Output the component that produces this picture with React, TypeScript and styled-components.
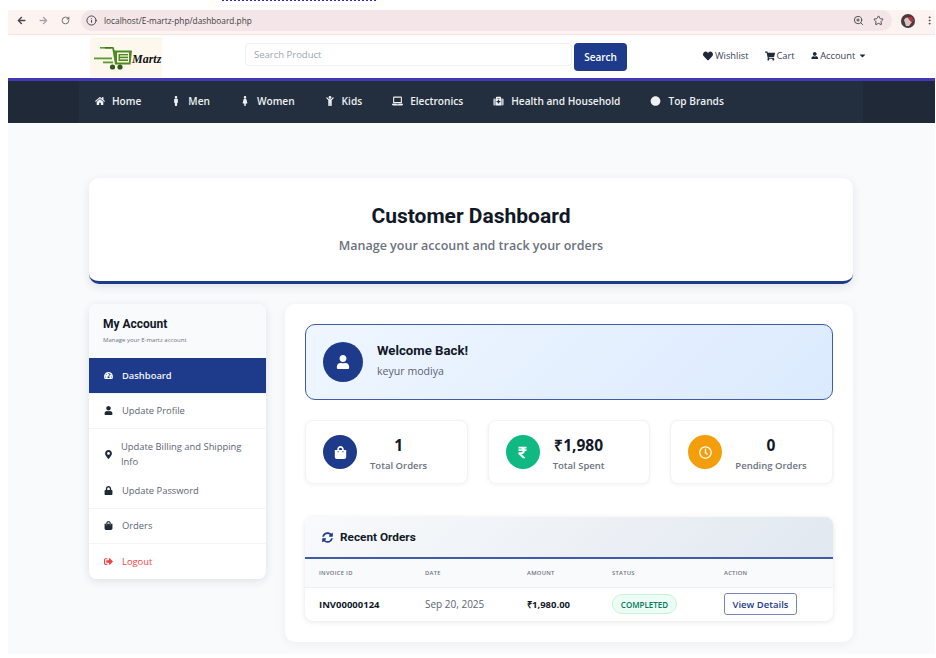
import React from "react";
import styled, { createGlobalStyle } from "styled-components";
import {
  FaArrowLeft,
  FaArrowRight,
  FaCaretDown,
  FaChild,
  FaCircle,
  FaFemale,
  FaHeart,
  FaHome,
  FaLaptop,
  FaLock,
  FaMale,
  FaMapMarkerAlt,
  FaMedkit,
  FaRegClock,
  FaRupeeSign,
  FaShoppingBag,
  FaShoppingCart,
  FaSignOutAlt,
  FaSyncAlt,
  FaTachometerAlt,
  FaUser,
} from "react-icons/fa";
import { LuEllipsisVertical, LuInfo, LuRotateCw, LuStar, LuZoomIn } from "react-icons/lu";

const GlobalStyle = createGlobalStyle`
  html, body {
    margin: 0;
    padding: 0;
    background: #fff;
    overflow: hidden;
  }
  * {
    box-sizing: border-box;
  }
  body {
    font-family: "Open Sans", "Liberation Sans", sans-serif;
  }
`;

const Frame = styled.div`
  width: 936px;
  height: 658px;
  padding: 0 1px 4px 8px;
  display: flex;
  flex-direction: column;
  overflow: hidden;
`;

const TopStrip = styled.div`
  height: 10px;
  flex: none;
  overflow: hidden;
`;

const DottedLine = styled.div`
  width: 154px;
  margin: -1px 0 0 214px;
  border-top: 2px dotted #2a2ad8;
`;

const BrowserBar = styled.div`
  height: 25px;
  flex: none;
  display: flex;
  align-items: center;
  padding: 0 0 3px 2px;
  background: #fdf3f1;
  border-bottom: 1px solid #fbe3df;
`;

const BrowserBtn = styled.span<{ $dim?: boolean }>`
  width: 22px;
  flex: none;
  display: flex;
  justify-content: center;
  font-size: 9px;
  color: ${(p) => (p.$dim ? "#a9a3a3" : "#474747")};
`;

const Omnibox = styled.div`
  width: 811px;
  height: 21px;
  margin-left: 5px;
  flex: none;
  display: flex;
  align-items: center;
  padding: 0 4px 0 1px;
  background: #f4e6e8;
  border-radius: 11px;
`;

const InfoBadge = styled.span`
  width: 18px;
  height: 18px;
  margin-right: 4px;
  flex: none;
  display: flex;
  align-items: center;
  justify-content: center;
  font-size: 11px;
  color: #3c3c3c;
`;

const UrlText = styled.span`
  flex: 1;
  font-size: 8.3px;
  color: #3d3d3d;
`;

const OmniIcon = styled.span`
  width: 20px;
  flex: none;
  display: flex;
  justify-content: center;
  font-size: 11px;
  color: #444;
`;

const ProfileSlot = styled.span`
  margin-left: 9px;
  width: 14px;
  height: 14px;
  flex: none;
  display: flex;
`;

const DotsSlot = styled.span`
  margin-left: 9px;
  flex: none;
  display: flex;
  font-size: 11px;
  color: #444;
`;

const Header = styled.header`
  height: 43px;
  flex: none;
  display: flex;
  align-items: flex-start;
  padding: 2px 0 0 82px;
  background: #fff;
`;

const LogoBox = styled.div`
  width: 72px;
  height: 40px;
  flex: none;
  background: #fdf8ee;
`;

const SearchInput = styled.div`
  width: 327px;
  height: 23px;
  margin: 6px 0 0 83px;
  flex: none;
  display: flex;
  align-items: center;
  padding: 0 8px;
  font-size: 9.5px;
  color: #9ca3af;
  background: #fff;
  border: 1px solid #eef0f3;
  border-radius: 4px;
`;

const SearchButton = styled.button`
  width: 53px;
  height: 28px;
  margin: 6px 0 0 2px;
  flex: none;
  padding: 0;
  font-family: inherit;
  font-size: 10px;
  font-weight: 600;
  color: #fff;
  background: #1e3a8a;
  border: none;
  border-radius: 4px;
`;

const TopLinks = styled.div`
  margin: 12px 0 0 76px;
  display: flex;
  align-items: center;
  gap: 16px;
`;

const TopLink = styled.span`
  display: flex;
  align-items: center;
  gap: 2px;
  font-size: 9.3px;
  color: #374151;
  svg {
    color: #1f2937;
    font-size: 10px;
  }
`;

const UserGlyph = styled(FaUser)`
  && {
    font-size: 7.5px;
  }
`;

const CaretGlyph = styled(FaCaretDown)`
  && {
    margin-left: 1px;
    font-size: 9px;
  }
`;

const NavBar = styled.nav`
  height: 45px;
  flex: none;
  padding-left: 71px;
  padding-right: 72px;
  background: #1f2937;
  border-top: 3px solid #4338b8;
`;

const NavInner = styled.div`
  height: 100%;
  display: flex;
  align-items: center;
  gap: 30px;
  padding: 0 0 2px 16px;
  background: #232f3e;
`;

const NavItem = styled.span<{ $wide?: boolean }>`
  display: flex;
  align-items: center;
  gap: 7px;
  font-size: 10.15px;
  font-weight: 600;
  color: #eef0f3;
  white-space: nowrap;
  svg {
    width: ${(p) => (p.$wide ? "11px" : "10px")};
    height: 10px;
  }
`;

const Page = styled.main`
  flex: 1;
  padding: 55px 82px 0 81px;
  background: #f8fafc;
`;

const Hero = styled.section`
  height: 106px;
  padding-top: 25px;
  text-align: center;
  background: #fff;
  border-bottom: 3px solid #1e3a8a;
  border-radius: 10px;
  box-shadow: 0 3px 10px rgba(30, 41, 59, 0.1);
`;

const HeroTitle = styled.h1`
  margin: 0;
  font-family: Roboto, "Liberation Sans", sans-serif;
  font-size: 21px;
  line-height: 26px;
  font-weight: 700;
  color: #111827;
`;

const HeroSub = styled.p`
  margin: 9px 0 0;
  font-size: 12.5px;
  line-height: 16px;
  font-weight: 600;
  color: #6b7280;
`;

const Columns = styled.div`
  display: grid;
  grid-template-columns: 177px 568px;
  justify-content: space-between;
  align-items: start;
  margin-top: 20px;
`;

const Sidebar = styled.aside`
  height: 275px;
  overflow: hidden;
  background: #fff;
  border-radius: 8px;
  box-shadow: 0 2px 8px rgba(30, 41, 59, 0.12);
`;

const SideHead = styled.div`
  height: 54px;
  padding: 13px 14px 0;
  background: #f8fafc;
`;

const SideTitle = styled.h2`
  margin: 0;
  font-family: Roboto, "Liberation Sans", sans-serif;
  font-size: 12px;
  line-height: 15px;
  font-weight: 700;
  color: #111827;
`;

const SideSub = styled.p`
  margin: 4px 0 0;
  font-size: 6px;
  line-height: 8px;
  color: #6b7280;
`;

const SideItem = styled.div<{ $active?: boolean; $danger?: boolean; $tall?: boolean; $plain?: boolean }>`
  height: ${(p) => (p.$tall ? "44px" : "35.5px")};
  display: flex;
  align-items: center;
  padding-left: 14px;
  padding-top: ${(p) => (p.$tall ? "6px" : "0")};
  font-size: 9.4px;
  line-height: 15.5px;
  font-weight: ${(p) => (p.$active ? 600 : 400)};
  color: ${(p) => (p.$active ? "#f3f4f6" : p.$danger ? "#ef4444" : "#5b6473")};
  background: ${(p) => (p.$active ? "#1e3a8a" : "#fff")};
  border-bottom: ${(p) => (p.$plain ? "none" : "1px solid #f3f4f6")};
`;

const SideIcon = styled.span<{ $active?: boolean; $danger?: boolean; $narrow?: boolean }>`
  width: ${(p) => (p.$narrow ? "18px" : "19px")};
  flex: none;
  display: flex;
  font-size: 9px;
  color: ${(p) => (p.$active ? "#f3f4f6" : p.$danger ? "#ef4444" : "#1f2937")};
  padding-left: 1px;
`;

const MainPanel = styled.div`
  height: 338px;
  padding: 20px;
  background: #fff;
  border-radius: 10px;
  box-shadow: 0 2px 10px rgba(30, 41, 59, 0.06);
`;

const Welcome = styled.section`
  height: 76px;
  display: flex;
  align-items: center;
  gap: 14px;
  padding: 0 17px;
  background: linear-gradient(135deg, #eff6ff, #dbeafe);
  border: 1px solid #3f5ba9;
  border-radius: 10px;
`;

const WelcomeText = styled.div`
  padding-bottom: 4px;
`;

const Circle = styled.div<{ $size: number; $color: string; $font: number }>`
  width: ${(p) => p.$size}px;
  height: ${(p) => p.$size}px;
  flex: none;
  display: flex;
  align-items: center;
  justify-content: center;
  font-size: ${(p) => p.$font}px;
  color: #fff;
  background: ${(p) => p.$color};
  border-radius: 50%;
`;

const WelcomeTitle = styled.h3`
  margin: 0;
  font-family: Roboto, "Liberation Sans", sans-serif;
  font-size: 13.2px;
  line-height: 18px;
  font-weight: 700;
  color: #111827;
`;

const WelcomeName = styled.p`
  margin: 4px 0 0;
  font-size: 10.6px;
  line-height: 15px;
  color: #5b6473;
`;

const StatsGrid = styled.div`
  display: grid;
  grid-template-columns: repeat(3, 1fr);
  gap: 20px;
  margin-top: 20px;
`;

const StatCard = styled.div`
  height: 64px;
  display: flex;
  align-items: center;
  gap: 13px;
  padding: 0 17px;
  background: #fff;
  border: 1px solid #f1f3f6;
  border-radius: 8px;
  box-shadow: 0 1px 4px rgba(30, 41, 59, 0.06);
`;

const StatText = styled.div`
  padding-top: 3px;
  text-align: center;
`;

const StatValue = styled.div`
  font-size: 15.5px;
  line-height: 20px;
  font-weight: 700;
  color: #111827;
`;

const StatLabel = styled.div`
  margin-top: 4px;
  font-size: 9.5px;
  line-height: 14px;
  font-weight: 600;
  color: #6b7280;
`;

const OrdersCard = styled.section`
  margin-top: 33px;
  overflow: hidden;
  background: #fff;
  border-radius: 8px;
  box-shadow: 0 1px 5px rgba(30, 41, 59, 0.12);
`;

const OrdersHead = styled.div`
  height: 42px;
  display: flex;
  align-items: center;
  gap: 7px;
  padding-left: 17px;
  font-family: Roboto, "Liberation Sans", sans-serif;
  font-size: 11.8px;
  font-weight: 700;
  color: #111827;
  background: linear-gradient(135deg, #f8fafc, #e2e8f0);
  border-bottom: 2px solid #3f5ba9;
  svg {
    font-size: 11px;
    color: #1e3a8a;
  }
`;

const Table = styled.table`
  width: 100%;
  table-layout: fixed;
  border-collapse: collapse;
`;

const Th = styled.th<{ $w: number }>`
  width: ${(p) => p.$w}px;
  height: 28px;
  padding: 0 0 0 14px;
  text-align: left;
  font-size: 5.8px;
  font-weight: 600;
  letter-spacing: 0.3px;
  text-transform: uppercase;
  color: #6b7280;
  background: #f8fafc;
  border-bottom: 1px solid #eef0f3;
`;

const Td = styled.td<{ $bold?: boolean; $size?: number }>`
  height: 34px;
  padding: 0 0 0 14px;
  font-size: ${(p) => p.$size ?? 10}px;
  font-weight: ${(p) => (p.$bold ? 700 : 400)};
  color: ${(p) => (p.$bold ? "#111827" : "#5b6473")};
`;

const Badge = styled.span`
  display: inline-flex;
  align-items: center;
  justify-content: center;
  width: 65px;
  height: 20px;
  font-size: 8px;
  font-weight: 600;
  color: #047857;
  background: #ecfdf5;
  border: 1px solid #c6f2dd;
  border-radius: 10px;
`;

const DetailsButton = styled.button`
  width: 73px;
  height: 22px;
  padding: 0;
  font-family: inherit;
  font-size: 9.5px;
  font-weight: 600;
  color: #1e3a8a;
  background: #fff;
  border: 1px solid #7486bb;
  border-radius: 3px;
`;

const LogoMark = () => (
  <svg width="72" height="40" viewBox="0 0 72 40">
    <rect x="10" y="10" width="11" height="1.6" fill="#5f9a2e" />
    <rect x="15" y="10" width="8" height="1.6" fill="#3f7a1a" />
    <path d="M22 10h1.6l1 3.5H42l-1.5 14H25z" fill="#4f8a1e" />
    <rect x="27" y="15.5" width="12" height="10" fill="#fdf8ee" />
    <rect x="28.5" y="17" width="9.5" height="7" fill="#4f8a1e" />
    <rect x="30" y="18.4" width="8" height="1.2" fill="#fdf8ee" />
    <rect x="30" y="21.2" width="8" height="1.2" fill="#fdf8ee" />
    <rect x="4" y="20.5" width="18" height="1.8" fill="#5f9a2e" />
    <rect x="13" y="24.5" width="10" height="1.8" fill="#5f9a2e" />
    <circle cx="22.5" cy="30" r="2.6" fill="#2f5b14" />
    <circle cx="30" cy="30" r="2.6" fill="#2f5b14" />
    <text x="42" y="26" fontFamily="Liberation Serif, serif" fontStyle="italic" fontWeight="700" fontSize="12" fill="#111">
      Martz
    </text>
  </svg>
);

const ProfileAvatar = () => (
  <svg width="14" height="14" viewBox="0 0 14 14">
    <circle cx="7" cy="7" r="7" fill="#4a3a3c" />
    <path d="M3 6a4 4 0 0 1 7-1l1 3-3 4H5z" fill="#d9c6c2" />
    <path d="M6 3h5l2 4-3 1z" fill="#b2363c" />
  </svg>
);

const navItems = [
  { label: "Home", icon: <FaHome /> },
  { label: "Men", icon: <FaMale /> },
  { label: "Women", icon: <FaFemale /> },
  { label: "Kids", icon: <FaChild /> },
  { label: "Electronics", icon: <FaLaptop />, wide: true },
  { label: "Health and Household", icon: <FaMedkit />, wide: true },
  { label: "Top Brands", icon: <FaCircle />, wide: true },
];

const stats = [
  { value: "1", label: "Total Orders", color: "#1e3a8a", icon: <FaShoppingBag /> },
  { value: "₹1,980", label: "Total Spent", color: "#10b981", icon: <FaRupeeSign /> },
  { value: "0", label: "Pending Orders", color: "#f59e0b", icon: <FaRegClock /> },
];

const App = () => {
  return (
    <Frame>
      <GlobalStyle />
      <TopStrip>
        <DottedLine />
      </TopStrip>
      <BrowserBar>
        <BrowserBtn>
          <FaArrowLeft />
        </BrowserBtn>
        <BrowserBtn $dim>
          <FaArrowRight />
        </BrowserBtn>
        <BrowserBtn>
          <LuRotateCw />
        </BrowserBtn>
        <Omnibox>
          <InfoBadge>
            <LuInfo />
          </InfoBadge>
          <UrlText>localhost/E-martz-php/dashboard.php</UrlText>
          <OmniIcon>
            <LuZoomIn />
          </OmniIcon>
          <OmniIcon>
            <LuStar />
          </OmniIcon>
        </Omnibox>
        <ProfileSlot>
          <ProfileAvatar />
        </ProfileSlot>
        <DotsSlot>
          <LuEllipsisVertical />
        </DotsSlot>
      </BrowserBar>

      <Header>
        <LogoBox>
          <LogoMark />
        </LogoBox>
        <SearchInput>Search Product</SearchInput>
        <SearchButton>Search</SearchButton>
        <TopLinks>
          <TopLink>
            <FaHeart /> Wishlist
          </TopLink>
          <TopLink>
            <FaShoppingCart /> Cart
          </TopLink>
          <TopLink>
            <UserGlyph /> Account <CaretGlyph />
          </TopLink>
        </TopLinks>
      </Header>

      <NavBar>
        <NavInner>
          {navItems.map((item) => (
            <NavItem key={item.label} $wide={item.wide}>
              {item.icon}
              {item.label}
            </NavItem>
          ))}
        </NavInner>
      </NavBar>

      <Page>
        <Hero>
          <HeroTitle>Customer Dashboard</HeroTitle>
          <HeroSub>Manage your account and track your orders</HeroSub>
        </Hero>

        <Columns>
          <Sidebar>
            <SideHead>
              <SideTitle>My Account</SideTitle>
              <SideSub>Manage your E-martz account</SideSub>
            </SideHead>
            <SideItem $active>
              <SideIcon $active>
                <FaTachometerAlt />
              </SideIcon>
              Dashboard
            </SideItem>
            <SideItem>
              <SideIcon>
                <FaUser />
              </SideIcon>
              Update Profile
            </SideItem>
            <SideItem $tall $plain>
              <SideIcon $narrow>
                <FaMapMarkerAlt />
              </SideIcon>
              <span>
                Update Billing and Shipping
                <br />
                Info
              </span>
            </SideItem>
            <SideItem>
              <SideIcon>
                <FaLock />
              </SideIcon>
              Update Password
            </SideItem>
            <SideItem>
              <SideIcon>
                <FaShoppingBag />
              </SideIcon>
              Orders
            </SideItem>
            <SideItem $danger $plain>
              <SideIcon $danger>
                <FaSignOutAlt />
              </SideIcon>
              Logout
            </SideItem>
          </Sidebar>

          <MainPanel>
            <Welcome>
              <Circle $size={40} $color="#1e3a8a" $font={14}>
                <FaUser />
              </Circle>
              <WelcomeText>
                <WelcomeTitle>Welcome Back!</WelcomeTitle>
                <WelcomeName>keyur modiya</WelcomeName>
              </WelcomeText>
            </Welcome>

            <StatsGrid>
              {stats.map((s) => (
                <StatCard key={s.label}>
                  <Circle $size={34} $color={s.color} $font={13}>
                    {s.icon}
                  </Circle>
                  <StatText>
                    <StatValue>{s.value}</StatValue>
                    <StatLabel>{s.label}</StatLabel>
                  </StatText>
                </StatCard>
              ))}
            </StatsGrid>

            <OrdersCard>
              <OrdersHead>
                <FaSyncAlt /> Recent Orders
              </OrdersHead>
              <Table>
                <thead>
                  <tr>
                    <Th $w={106}>Invoice ID</Th>
                    <Th $w={102}>Date</Th>
                    <Th $w={85}>Amount</Th>
                    <Th $w={112}>Status</Th>
                    <Th $w={123}>Action</Th>
                  </tr>
                </thead>
                <tbody>
                  <tr>
                    <Td $bold $size={9.5}>
                      INV00000124
                    </Td>
                    <Td>Sep 20, 2025</Td>
                    <Td $bold $size={9.5}>
                      ₹1,980.00
                    </Td>
                    <Td>
                      <Badge>COMPLETED</Badge>
                    </Td>
                    <Td>
                      <DetailsButton>View Details</DetailsButton>
                    </Td>
                  </tr>
                </tbody>
              </Table>
            </OrdersCard>
          </MainPanel>
        </Columns>
      </Page>
    </Frame>
  );
};

export default App;
